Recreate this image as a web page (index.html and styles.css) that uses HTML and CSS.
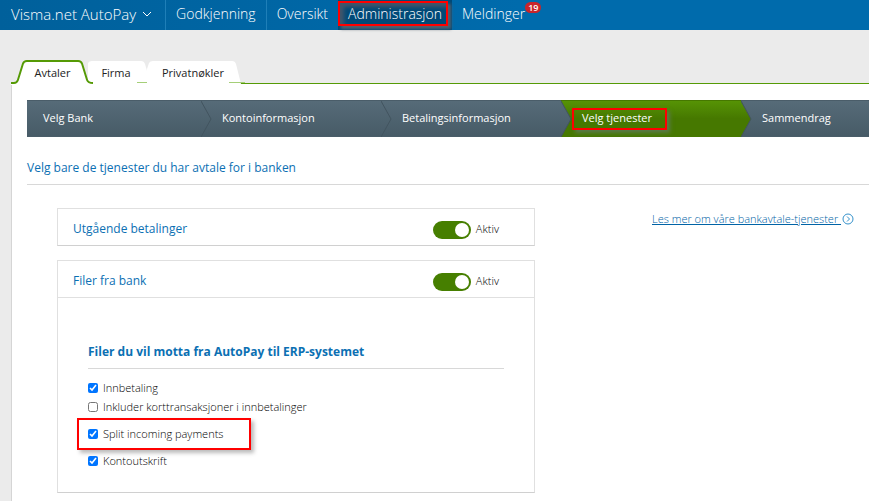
FILE: index.html
```html
<!DOCTYPE html>
<html lang="no">
  <head>
    <meta charset="UTF-8" />
    <meta name="viewport" content="width=device-width, initial-scale=1.0" />
    <title>Visma.net AutoPay</title>
    <link rel="stylesheet" href="styles.css">
  </head>

  <body>
    <nav class="topbar">
      <button class="brand" type="button">
        Visma.net AutoPay
        <svg class="caret" viewBox="0 0 10 6"><path d="M1 1l4 4 4-4" /></svg>
      </button>
      <a class="nav-link" href="#">Godkjenning</a>
      <a class="nav-link" href="#">Oversikt</a>
      <a class="nav-link active" href="#">Administrasjon</a>
      <a class="nav-link" href="#">Meldinger<span class="badge">19</span></a>
    </nav>

    <div class="tabs">
      <a class="tab selected" href="#">
        <svg class="tab-shape" viewBox="0 0 84 25" preserveAspectRatio="none">
          <path class="fill" d="M0 25V23H3Q6 23 7 20L12 4Q13 1 16 1H68Q71 1 72 4L77 20Q78 23 82 23V25Z" />
          <path class="edge" d="M0 23H3Q6 23 7 20L12 4Q13 1 16 1H68Q71 1 72 4L77 20Q78 23 83 23" />
        </svg>
        <span>Avtaler</span>
      </a>
      <a class="tab" href="#">
        <svg class="tab-shape" viewBox="0 0 66 25" preserveAspectRatio="none">
          <path class="fill" d="M0 24V3Q1 1 4 1H53Q56 1 57 4L63 24Z" />
          <path class="foot" d="M49 22.500H66" />
        </svg>
        <span>Firma</span>
      </a>
      <a class="tab" href="#">
        <svg class="tab-shape" viewBox="0 0 98 25" preserveAspectRatio="none">
          <path class="fill" d="M0 24V9L2 3Q3 1 6 1H85Q88 1 89 4L94 24Z" />
          <path class="foot" d="M82 22.500H98" />
        </svg>
        <span>Privatnøkler</span>
      </a>
    </div>

    <main class="panel">
      <svg class="defs" width="0" height="0">
        <linearGradient id="grey" x2="0" y2="1">
          <stop stop-color="#566b78" />
          <stop offset="1" stop-color="#475b67" />
        </linearGradient>
        <linearGradient id="green" x2="0" y2="1">
          <stop stop-color="#569305" />
          <stop offset=".5" stop-color="#467800" />
        </linearGradient>
      </svg>

      <ol class="steps">
        <li class="step">Velg Bank</li>
        <li class="step">
          <svg class="arrow" viewBox="0 0 12 36"><path d="M0 0L10 18L0 36" /></svg>
          Kontoinformasjon
        </li>
        <li class="step">
          <svg class="arrow" viewBox="0 0 12 36"><path d="M0 0L10 18L0 36" /></svg>
          Betalingsinformasjon
        </li>
        <li class="step current">
          <svg class="arrow" viewBox="0 0 12 36"><path d="M0 0L10 18L0 36" /></svg>
          <span>Velg tjenester</span>
        </li>
        <li class="step">
          <svg class="arrow green" viewBox="0 0 12 36"><path d="M0 0L10 18L0 36" /></svg>
          Sammendrag
        </li>
      </ol>

      <h1 class="intro">Velg bare de tjenester du har avtale for i banken</h1>

      <div class="content">
        <div class="services">
          <section class="card">
            <div class="card-head">
              <h2>Utgående betalinger</h2>
              <label class="switch"><input type="checkbox" checked />Aktiv</label>
            </div>
          </section>

          <section class="card">
            <div class="card-head">
              <h2>Filer fra bank</h2>
              <label class="switch"><input type="checkbox" checked />Aktiv</label>
            </div>
            <div class="card-body">
              <h3>Filer du vil motta fra AutoPay til ERP-systemet</h3>
              <label class="option"><input type="checkbox" checked />Innbetaling</label>
              <label class="option"><input type="checkbox" />Inkluder korttransaksjoner i innbetalinger</label>
              <label class="option marked"><input type="checkbox" checked />Split incoming payments</label>
              <label class="option"><input type="checkbox" checked />Kontoutskrift</label>
            </div>
          </section>
        </div>

        <a class="more" href="#"><span>Les mer om våre bankavtale-tjenester&nbsp;</span><svg viewBox="0 0 12 12"><circle cx="6" cy="6" r="5" /><path d="M5 3.500l2.500 2.500L5 8.500" /></svg></a>
      </div>
    </main>
  </body>
</html>
```
FILE: styles.css
```css
*,
*::before,
*::after {
  box-sizing: border-box;
}

body {
  margin: 0;
  min-height: 100vh;
  display: flex;
  flex-direction: column;
  background-color: #ebebeb;
  color: #222;
  font-family: 'Open Sans', 'Noto Sans', sans-serif;
  font-size: 11px;
  line-height: 16px;
  overflow-x: hidden;
}

h1,
h2,
h3 {
  margin: 0;
  font-weight: 400;
  color: #0b70b3;
}

/* top navigation */
.topbar {
  display: flex;
  height: 30px;
  background: linear-gradient(90deg, #00609b, #006bac 60%);
  font-size: 14px;
  line-height: 28px;
}

.brand,
.nav-link {
  color: #fff;
  font: inherit;
  font-weight: 300;
  text-decoration: none;
  white-space: nowrap;
  border: 0;
  border-right: 1px solid #1f7fb8;
}

.brand {
  display: flex;
  align-items: center;
  gap: 6px;
  padding: 0 13px 2px 11px;
  background: none;
  font-size: 15px;
}

.caret {
  width: 10px;
  height: 6px;
  fill: none;
  stroke: #fff;
}

.nav-link {
  position: relative;
  padding: 0 10px;
}

.nav-link:nth-child(n + 3) {
  border-right: 0;
}

.nav-link.active {
  background-color: #004a78;
}

.nav-link.active::after {
  content: '';
  position: absolute;
  inset: 1px 4px 4px 0;
  border: 2px solid #f00;
  box-shadow: 3px 3px 3px #53606d, inset 4px 4px 4px #43566a;
}

.badge {
  position: absolute;
  top: 2px;
  left: calc(100% - 10px);
  padding: 0 3px;
  border-radius: 6px;
  background-color: #c9252b;
  font-size: 9px;
  font-weight: 600;
  line-height: 11px;
}

/* tabs */
.tabs {
  display: flex;
  margin: 30px 0 -1px 11px;
}

.tab {
  position: relative;
  height: 24px;
  padding-top: 5px;
  color: #222;
  text-align: center;
  text-decoration: none;
  width: 54px;
}

.tab:first-child {
  z-index: 1;
  width: 83px;
}

.tab:last-child {
  width: 98px;
  padding-right: 6px;
}

.tab span {
  position: relative;
}

.tab-shape {
  position: absolute;
  top: 0;
  left: 0;
  width: 100%;
  height: 25px;
}

.tab:nth-child(2) {
  width: 60px;
  margin-left: -6px;
  margin-right: -1px;
  padding-right: 4px;
}

.tab:nth-child(2) .tab-shape {
  width: 66px;
}

.fill {
  fill: #fff;
}

.edge {
  fill: none;
  stroke: #559a05;
  stroke-width: 2;
}

.foot {
  stroke: #a5cf78;
}

.panel {
  flex: 1;
  margin-left: 11px;
  padding: 16px 0 8px 15px;
  background-color: #fff;
  border-top: 1px solid #559a05;
  border-left: 1px solid #d5d5d5;
}

/* wizard steps */
.defs {
  position: absolute;
}

.steps {
  display: flex;
  margin: 0;
  padding: 0;
  list-style: none;
  color: #fff;
}

.step {
  position: relative;
  flex: 0 0 180px;
  height: 37px;
  padding: 9px 0 0 21px;
  background: linear-gradient(#566b78, #475b67);
  border-top: 1px solid #4a5d69;
  border-bottom: 1px solid #4a5d69;
}

.step:first-child {
  flex-basis: 174px;
  padding-left: 16px;
}

.step:last-child {
  flex: 1 0 100px;
}

.step.current {
  background: linear-gradient(#569305, #467800 50%);
  border-color: #467800;
}

.step.current span::after {
  content: '';
  position: absolute;
  top: 7px;
  left: 11px;
  width: 95px;
  height: 22px;
  border: 2px solid #f00;
  box-shadow: 3px 3px 4px #5a7a48;
}

.arrow {
  position: absolute;
  top: 0;
  left: 0;
  width: 12px;
  height: 36px;
  fill: url(#grey);
  stroke: #42545f;
}

.arrow.green {
  fill: url(#green);
}

.intro {
  padding: 23px 0 8px;
  border-bottom: 1px solid #d8d8d8;
  font-size: 12px;
  line-height: 16px;
}

.content {
  display: flex;
  align-items: flex-start;
  gap: 117px;
  padding: 23px 0 0 30px;
}

.services {
  flex: 0 1 478px;
}

.card {
  margin-bottom: 14px;
  border: 1px solid #e0e0e0;
  border-bottom-color: #d0d0d0;
}

.card-head {
  display: flex;
  align-items: center;
  justify-content: space-between;
  height: 36px;
  padding: 4px 35px 0 15px;
}

.card-head h2 {
  font-size: 12px;
}

.switch {
  display: flex;
  align-items: center;
  gap: 5px;
}

.switch input {
  appearance: none;
  display: flex;
  width: 38px;
  height: 18px;
  margin: 2px 0 0;
  padding: 2px;
  border-radius: 9px;
  background-color: #467f00;
}

.switch input::before {
  content: '';
  width: 14px;
  height: 14px;
  margin-left: auto;
  border-radius: 50%;
  background-color: #fff;
}

.card-body {
  padding: 46px 30px 20px;
  border-top: 1px solid #e0e0e0;
}

.card-body h3 {
  margin-bottom: 11px;
  padding-bottom: 8px;
  border-bottom: 1px solid #d8d8d8;
  font-size: 12px;
  font-weight: 700;
}

.switch,
.option,
.more {
  font-weight: 300;
}

.switch,
.option {
  color: #000;
}

.option {
  display: flex;
  align-items: center;
  gap: 5px;
  height: 16px;
  margin-bottom: 3px;
}

.option input {
  width: 10px;
  height: 10px;
  margin: 0;
}

.option.marked {
  width: 174px;
  height: 32px;
  margin: 0 0 3px -11px;
  padding-left: 9px;
  border: 2px solid #f00;
  box-shadow: 3px 3px 4px #bbb;
}

.more {
  display: flex;
  align-items: center;
  gap: 1px;
  margin-top: 3px;
  color: #0063a6;
  white-space: nowrap;
}

.more svg {
  width: 12px;
  height: 12px;
  fill: none;
  stroke: #3391cb;
}
```
